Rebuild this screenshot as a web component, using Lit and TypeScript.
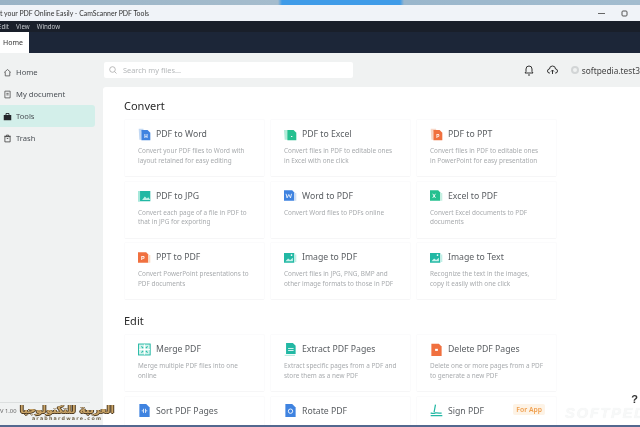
import { LitElement, html, css, svg } from 'lit'
import { customElement } from 'lit/decorators.js'

type Tool = { title: string; desc: string[]; icon: string; badge?: string }

const convert: Tool[] = [
  { title: 'PDF to Word', desc: ['Convert your PDF files to Word with', 'layout retained for easy editing'], icon: 'word' },
  { title: 'PDF to Excel', desc: ['Convert files in PDF to editable ones', 'in Excel with one click'], icon: 'excel' },
  { title: 'PDF to PPT', desc: ['Convert files in PDF to editable ones', 'in PowerPoint for easy presentation'], icon: 'ppt' },
  { title: 'PDF to JPG', desc: ['Convert each page of a file in PDF to', 'that in JPG for exporting'], icon: 'jpg' },
  { title: 'Word to PDF', desc: ['Convert Word files to PDFs online'], icon: 'w2p' },
  { title: 'Excel to PDF', desc: ['Convert Excel documents to PDF', 'documents'], icon: 'x2p' },
  { title: 'PPT to PDF', desc: ['Convert PowerPoint presentations to', 'PDF documents'], icon: 'p2p' },
  { title: 'Image to PDF', desc: ['Convert files in JPG, PNG, BMP and', 'other image formats to those in PDF'], icon: 'img' },
  { title: 'Image to Text', desc: ['Recognize the text in the images,', 'copy it easily with one click'], icon: 'img' }
]

const edit: Tool[] = [
  { title: 'Merge PDF', desc: ['Merge multiple PDF files into one', 'online'], icon: 'merge' },
  { title: 'Extract PDF Pages', desc: ['Extract specific pages from a PDF and', 'store them as a new PDF'], icon: 'extract' },
  { title: 'Delete PDF Pages', desc: ['Delete one or more pages from a PDF', 'to generate a new PDF'], icon: 'delete' },
  { title: 'Sort PDF Pages', desc: ['Adjust the order of PDF pages, delete'], icon: 'sort' },
  { title: 'Rotate PDF', desc: ['Rotate all or specific pages in a PDF'], icon: 'rotate' },
  { title: 'Sign PDF', desc: ['Add a signature to your PDFs to'], icon: 'sign', badge: 'For App' }
]

const BLUE = '#3f83e0'
const GREEN = '#25c08f'
const ORANGE = '#f0703f'
const TEAL = '#22b8a4'

const page = (fill: string, letter: string) => svg`
  <path d="M5 3h9l4 4v11H5z" fill=${fill}/>
  <text x="11.500" y="14" font-size="7" font-family="Liberation Sans" font-weight="700" fill="#fff" text-anchor="middle">${letter}</text>`

const icons: Record<string, unknown> = {
  word: svg`<path d="M1 1h7v4H5v12H2z" fill="#c3d9f4"/>${page(BLUE, 'H')}`,
  excel: svg`<path d="M0 3h6v14H1z" fill="#b5ecd9"/>${page(GREEN, '▪')}`,
  ppt: svg`<path d="M1 1h8v4H5v12H2z" fill="#f6d5c6"/>${page(ORANGE, 'P')}`,
  jpg: svg`<path d="M0 3h18v15H0z" fill=${TEAL}/><path d="M6 16l4-5 3 3 2-2 3 4z" fill="#bff0e6"/><path d="M0 3h3v15H0z" fill="#a6e8da"/>`,
  w2p: svg`<path d="M0 2h12l3 3v12H0z" fill=${BLUE}/><path d="M3 7l1.500 6L7 8l2.500 5L11 7" fill="none" stroke="#fff" stroke-width="1.200"/><path d="M15 6h3v11h-3z" fill="#cfe0f5"/>`,
  x2p: svg`<path d="M0 2h12l3 3v12H0z" fill=${GREEN}/><path d="M4 7l4 6M8 7l-4 6" stroke="#fff" stroke-width="1.300"/><path d="M15 6h3v11h-3z" fill="#c5f0e2"/>`,
  p2p: svg`<path d="M0 2h12l3 3v12H0z" fill=${ORANGE}/><text x="7" y="13" font-size="8" font-family="Liberation Sans" font-weight="700" fill="#fff" text-anchor="middle">P</text><path d="M15 6h3v11h-3z" fill="#f8dcc6"/>`,
  img: svg`<path d="M0 3h15v14H0z" fill=${TEAL}/><path d="M2 15l4-4 3 2 4-3v5z" fill="#c6f2ea"/><circle cx="11" cy="6" r="1.300" fill="#fff"/><path d="M15 5h3v11h-3z" fill="#c0efe6"/>`,
  merge: svg`<rect x=".8" y="1.500" width="17" height="16" fill="#d3f3ec" stroke=${TEAL} stroke-width="1.400"/><path d="M9.500 2v15M1.500 9.500h16" stroke="#fff" stroke-width="1.400"/><path d="M5 5l2.500 2.500M14 5l-2.500 2.500M5 14l2.500-2.500M14 14l-2.500-2.500" stroke=${TEAL} stroke-width="1.600"/>`,
  extract: svg`<path d="M3 0h10l4 4v12H3z" fill=${TEAL}/><path d="M6 8h8M6 11h8" stroke="#fff" stroke-width="1.200"/><path d="M1 18h15" stroke="#a5e6d8" stroke-width="1.400"/>`,
  delete: svg`<path d="M2 1h11l4 4v14H2z" fill=${ORANGE}/><rect x="7.500" y="8.500" width="4" height="3" fill="#fff"/>`,
  sort: svg`<path d="M2 0h10l5 5v14H2z" fill=${BLUE}/><path d="M8 7v6M11 7v6" stroke="#fff" stroke-width="1.200"/><path d="M5.500 10h1.500M12 10h1.500" stroke="#fff" stroke-width="1.400"/>`,
  rotate: svg`<path d="M2 0h10l5 5v14H2z" fill=${BLUE}/><circle cx="9.500" cy="10.500" r="3.200" fill="none" stroke="#fff" stroke-width="1.300"/>`,
  sign: svg`<path d="M1 17h17" stroke=${TEAL} stroke-width="1.600"/><path d="M1 13c3 1.500 5 1 7 0 3-.5 6 .5 9 .5M6 12l2-11" fill="none" stroke=${TEAL} stroke-width="1.800"/>`
}

@customElement('app-root')
export class AppRoot extends LitElement {
  static styles = css`
    * {
      box-sizing: border-box;
    }

    :host {
      display: flex;
      flex-direction: column;
      width: 640px;
      height: 427px;
      overflow: hidden;
      position: relative;
      background: #fff;
      font-family: 'Noto Sans', 'Open Sans', sans-serif;
      color: #333;
      filter: blur(0.35px);
    }

    .desktop {
      height: 5px;
      flex: none;
      background: linear-gradient(90deg, #9ab3c6 0, #a5bccd 278px, #3f9be8 282px, #3f9be8 400px, #9ab6cc 404px, #a3bccf 100%);
    }

    .titlebar {
      height: 16px;
      flex: none;
      display: flex;
      align-items: center;
      justify-content: space-between;
      padding-right: 12px;
      background: #f0f3f8;
      font-family: Lato, 'Noto Sans', sans-serif;
      font-size: 6.900px;
      color: #333;
      white-space: nowrap;
    }

    .win {
      display: flex;
      align-items: center;
      gap: 16px;
    }

    .menu {
      height: 11px;
      flex: none;
      display: flex;
      align-items: center;
      gap: 7px;
      background: #191f2a;
      color: #c4c8cd;
      font-size: 6.200px;
    }

    .menu span:first-child {
      margin-left: -2px;
    }

    .tabs {
      height: 21px;
      flex: none;
      background: #1c2638;
      display: flex;
    }

    .tab {
      width: 29px;
      background: #fff;
      font-size: 7px;
      color: #333;
      display: flex;
      align-items: center;
      padding-left: 3px;
    }

    .body {
      flex: 1;
      display: flex;
      min-height: 0;
      background: #f0f2f2;
    }

    .side {
      width: 103px;
      flex: none;
      padding-top: 8px;
      display: flex;
      flex-direction: column;
      position: relative;
    }

    .nav {
      width: 95px;
      height: 22px;
      display: flex;
      align-items: center;
      gap: 4px;
      padding-left: 3px;
      font-size: 7.600px;
      color: #4a4f55;
      border-radius: 0 3px 3px 0;
    }

    .nav svg {
      flex: none;
      width: 9px;
      height: 9px;
    }

    .nav.active {
      background: #d3efea;
    }

    .version {
      position: absolute;
      left: 0;
      bottom: 12px;
      width: 90px;
      border-top: 1px solid #dcdfdf;
      padding-top: 4px;
      font-size: 5.800px;
      color: #666;
    }

    .main {
      flex: 1;
      display: flex;
      flex-direction: column;
      min-width: 0;
    }

    .search-row {
      height: 34px;
      flex: none;
      display: flex;
      align-items: flex-start;
      padding-top: 9px;
    }

    .search {
      margin-left: 1px;
      width: 249px;
      height: 16px;
      background: #fff;
      border-radius: 2px;
      display: flex;
      align-items: center;
      gap: 6px;
      padding-left: 5px;
      font-size: 7.400px;
      color: #b5b8ba;
    }

    .search svg,
    .tools svg {
      flex: none;
    }

    .tools {
      margin-left: auto;
      height: 16px;
      display: flex;
      align-items: center;
      gap: 13px;
      font-size: 8.300px;
      color: #444;
      white-space: nowrap;
    }

    .user {
      display: flex;
      align-items: center;
      gap: 3px;
    }

    .avatar {
      width: 8px;
      height: 8px;
      border-radius: 50%;
      border: 2px solid #d2d5d6;
    }

    .content {
      flex: 1;
      background: #fff;
      border-radius: 3px 0 0 0;
      padding: 11px 0 0 21px;
      min-height: 0;
      overflow: hidden;
    }

    h2 {
      margin: 0;
      font-size: 11px;
      font-weight: 400;
      line-height: 15px;
      color: #2b2b2b;
    }

    .edit {
      margin-top: 13px;
    }

    .grid {
      display: grid;
      grid-template-columns: repeat(3, 141px);
      grid-auto-rows: 58px;
      column-gap: 5px;
      row-gap: 3.500px;
      margin-top: 6px;
    }

    .card {
      border: 1px solid #fbfbfc;
      border-bottom-color: #f6f6f7;
      border-radius: 2px;
      padding: 5px 0 0 13px;
      position: relative;
    }

    .head {
      display: flex;
      align-items: center;
      gap: 5px;
      height: 18px;
      font-size: 8.700px;
      color: #5a5e62;
    }

    .head svg {
      width: 13px;
      height: 13px;
      flex: none;
    }

    .desc {
      margin-top: 3px;
      font-size: 6.400px;
      line-height: 9.600px;
      color: #a8abae;
      white-space: nowrap;
    }

    .badge {
      position: absolute;
      right: 11px;
      top: 7px;
      padding: 1px 3px;
      background: #fdf3e6;
      border-radius: 2px;
      color: #f0a050;
      font-size: 6.800px;
      font-weight: 600;
    }

    .help {
      position: absolute;
      right: 2px;
      bottom: 22px;
      font-size: 11px;
      font-weight: 700;
      color: #333;
      font-family: 'Liberation Sans', sans-serif;
    }

    .soft {
      position: absolute;
      left: 565px;
      bottom: 6px;
      font-family: 'Liberation Sans', sans-serif;
      font-size: 15px;
      font-weight: 700;
      font-style: italic;
      letter-spacing: 1.500px;
      white-space: nowrap;
      color: #f7f8f8;
      text-shadow: 0 0 1px #eceeee;
    }

    .logo {
      position: absolute;
      left: 15px;
      bottom: 3px;
      width: 104px;
      height: 20px;
      display: flex;
      flex-direction: column;
      align-items: center;
      line-height: 1;
      font-family: 'DejaVu Sans', sans-serif;
    }

    .logo b {
      direction: rtl;
      white-space: nowrap;
      font-size: 10.500px;
      color: #c9a468;
      text-shadow: 1px 0 0 #4d3a20, -1px 0 0 #4d3a20, 0 1px 0 #4d3a20;
    }

    .logo span {
      margin-top: 2px;
      font-size: 4.800px;
      font-weight: 700;
      letter-spacing: 1.200px;
      color: #75684f;
    }

    .strip {
      position: absolute;
      left: 0;
      right: 0;
      bottom: 0;
      height: 2px;
      background: #53688f;
    }
  `

  private navIcon(name: string) {
    const paths: Record<string, unknown> = {
      home: svg`<path d="M1.500 6L6 2l4.500 4M3 5.500V10.500h6V5.500" fill="none" stroke="#555" stroke-width="1.100"/>`,
      doc: svg`<path d="M2.500 1.500h7v9h-7zM4.500 4.500h3M4.500 6.500h3" fill="none" stroke="#555" stroke-width="1.100"/>`,
      tools: svg`<path d="M1 4h10v7H1z" fill="#23262b"/><path d="M4 4V2h4v2" fill="none" stroke="#23262b" stroke-width="1.200"/>`,
      trash: svg`<path d="M2.500 3.500h7v7h-7zM1.500 3h9M4.500 3V1.500h3V3M5 6h2" fill="none" stroke="#444" stroke-width="1.100"/>`
    }
    return html`<svg viewBox="0 0 12 12">${paths[name]}</svg>`
  }

  private renderCard(tool: Tool) {
    return html`
      <div class="card">
        <div class="head">
          <svg viewBox="0 0 19 19">${icons[tool.icon]}</svg>
          <span>${tool.title}</span>
        </div>
        <div class="desc">${tool.desc.map((line) => html`<div>${line}</div>`)}</div>
        ${tool.badge ? html`<span class="badge">${tool.badge}</span>` : ''}
      </div>
    `
  }

  render() {
    return html`
      <div class="desktop"></div>
      <div class="titlebar">
        <span>t your PDF Online Easily - CamScanner PDF Tools</span>
        <span class="win">
          <svg width="7" height="7" viewBox="0 0 7 7"><path d="M0 3.500h7" stroke="#666" stroke-width="1"/></svg>
          <svg width="7" height="7" viewBox="0 0 7 7"><rect x="1" y="1" width="5" height="5" rx="1" fill="none" stroke="#555"/></svg>
        </span>
      </div>
      <div class="menu"><span>Edit</span><span>View</span><span>Window</span></div>
      <div class="tabs"><div class="tab">Home</div></div>
      <div class="body">
        <aside class="side">
          <div class="nav">${this.navIcon('home')}Home</div>
          <div class="nav">${this.navIcon('doc')}My document</div>
          <div class="nav active">${this.navIcon('tools')}Tools</div>
          <div class="nav">${this.navIcon('trash')}Trash</div>
          <div class="version">V 1.00</div>
        </aside>
        <div class="main">
          <div class="search-row">
            <div class="search">
              <svg width="8" height="8" viewBox="0 0 8 8"><circle cx="3.500" cy="3.500" r="2.800" fill="none" stroke="#aaa" stroke-width=".8"/><path d="M5.500 5.500L7.500 7.500" stroke="#aaa" stroke-width=".8"/></svg>
              Search my files...
            </div>
            <div class="tools">
              <svg width="10" height="11" viewBox="0 0 10 11"><path d="M1 8h8L8 6.500V4a3 3 0 0 0-6 0v2.500zM4 10h2" fill="none" stroke="#333" stroke-width="1"/></svg>
              <svg width="11" height="10" viewBox="0 0 11 10"><path d="M3 8H2.500a2 2 0 0 1 0-4 3 3 0 0 1 6 0 2 2 0 0 1 0 4H8M5.500 9V5M4 6.500L5.500 5 7 6.500" fill="none" stroke="#333" stroke-width="1"/></svg>
              <span class="user"><span class="avatar"></span>softpedia.test3</span>
            </div>
          </div>
          <div class="content">
            <h2>Convert</h2>
            <div class="grid">${convert.map((t) => this.renderCard(t))}</div>
            <h2 class="edit">Edit</h2>
            <div class="grid">${edit.map((t) => this.renderCard(t))}</div>
          </div>
        </div>
      </div>
      <div class="logo"><b>العربية للتكنولوجيا</b><span>arabhardware.com</span></div>
      <div class="soft">SOFTPEDIA</div>
      <div class="help">?</div>
      <div class="strip"></div>
    `
  }
}
